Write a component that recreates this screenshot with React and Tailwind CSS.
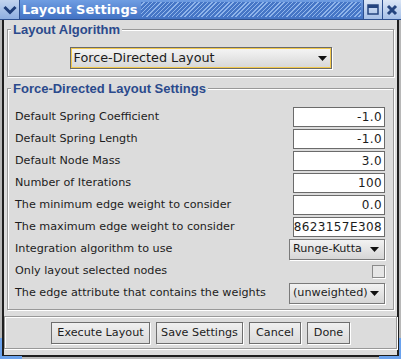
import React from 'react';

const font = { fontFamily: '"DejaVu Sans", Verdana, sans-serif' };
const legendFont = { fontFamily: '"Liberation Sans", Arial, sans-serif' };

const rows = [
  { label: 'Default Spring Coefficient', kind: 'field', value: '-1.0' },
  { label: 'Default Spring Length', kind: 'field', value: '-1.0' },
  { label: 'Default Node Mass', kind: 'field', value: '3.0' },
  { label: 'Number of Iterations', kind: 'field', value: '100' },
  { label: 'The minimum edge weight to consider', kind: 'field', value: '0.0' },
  { label: 'The maximum edge weight to consider', kind: 'field', value: '8623157E308' },
  { label: 'Integration algorithm to use', kind: 'combo', value: 'Runge-Kutta' },
  { label: 'Only layout selected nodes', kind: 'check' },
  { label: 'The edge attribute that contains the weights', kind: 'combo', value: '(unweighted)' },
];

function Arrow() {
  return (
    <svg width="9" height="5" viewBox="0 0 9 5" className="shrink-0">
      <path d="M0 0h9L4.5 5z" fill="#111" />
    </svg>
  );
}

function Legend({ children }) {
  return (
    <div
      className="-mt-[8px] ml-[3px] px-[2px] w-fit bg-[#dcdcdc] text-[13px] leading-[15px] font-bold text-[#2b4a8c]"
      style={legendFont}
    >
      {children}
    </div>
  );
}

function Row({ row }) {
  return (
    <div className="h-[22px] flex items-center justify-between">
      <span className="whitespace-nowrap">{row.label}</span>
      {row.kind === 'field' && (
        <div className="w-[92px] h-[20px] bg-white border border-[#6b6b6b] flex justify-end items-center overflow-hidden pr-[2px] whitespace-nowrap text-[12px] tracking-[0.4px]">
          <span className="shrink-0">{row.value}</span>
        </div>
      )}
      {row.kind === 'combo' && (
        <div className="w-[96px] h-[21px] border border-[#7a7a7a] bg-gradient-to-b from-[#f2f2f2] to-[#d6d6d6] shadow-[1px_1px_0_#fff] flex items-center justify-between pl-[3px] pr-[5px] whitespace-nowrap">
          <span>{row.value}</span>
          <Arrow />
        </div>
      )}
      {row.kind === 'check' && (
        <div className="w-[13px] h-[13px] border border-[#8a8a8a] bg-[#e6e6e6] shadow-[1px_1px_0_#fff]" />
      )}
    </div>
  );
}

function Btn({ children, w }) {
  return (
    <div className={`${w} h-[22px] border border-[#6e6e6e] bg-gradient-to-b from-[#f0f0f0] to-[#dadada] shadow-[1px_1px_0_#fff] flex items-center justify-center`}>
      {children}
    </div>
  );
}

export default function App() {
  return (
    <div className="w-[401px] h-[359px] bg-[#c4c4c4] relative overflow-hidden text-[11.2px] text-[#1c1c1c]" style={font}>
      {/* title bar */}
      <div className="h-[20px] flex items-stretch bg-gradient-to-b from-[#6f9de2] to-[#4272c4] border-b border-[#2c4f8f]">
        <div className="w-[20px] flex items-center justify-center bg-gradient-to-b from-[#c2d4ef] to-[#8eaee0] border-r border-[#2c4f8f]">
          <svg width="14" height="10" viewBox="0 0 14 10">
            <path d="M1.5 2L7 7.5L12.5 2" stroke="#1d3c78" strokeWidth="3" fill="none" />
          </svg>
        </div>
        <div className="pl-[2px] pr-[4px] text-white font-bold text-[13px] leading-[19px] whitespace-nowrap">Layout Settings</div>
        <div className="flex-1 my-[2px] bg-[repeating-linear-gradient(135deg,#4676c6_0px,#4676c6_2px,#8fb4ea_2px,#8fb4ea_3px)]" />
        <div className="w-[19px] ml-[2px] flex items-center justify-center bg-gradient-to-b from-[#dbe6f6] to-[#a6c0e8] border-l border-[#2c4f8f]">
          <svg width="12" height="11" viewBox="0 0 12 11">
            <rect x="1" y="1" width="10" height="9" fill="none" stroke="#24447f" strokeWidth="1.5" />
            <rect x="1" y="1" width="10" height="3" fill="#24447f" />
          </svg>
        </div>
        <div className="w-[19px] flex items-center justify-center bg-gradient-to-b from-[#dbe6f6] to-[#a6c0e8] border-l border-[#2c4f8f]">
          <svg width="12" height="12" viewBox="0 0 12 12">
            <path d="M2 2L10 10M10 2L2 10" stroke="#24447f" strokeWidth="3" />
          </svg>
        </div>
      </div>

      {/* window body */}
      <div className="h-[339px] border-x-2 border-b-2 border-[#b8b8b8]">
        <div className="h-full border-x-2 border-b-2 border-[#1e1e1e] bg-[#dcdcdc] flex flex-col">
          <div className="px-[3px] flex flex-col">
            <div className="mt-[9px] border border-[#999] shadow-[1px_1px_0_#fff,inset_1px_1px_0_#fff] pb-[7px]">
              <Legend>Layout Algorithm</Legend>
              <div className="mt-[10px] mx-auto w-[262px] h-[22px] border border-[#6a6a6a] shadow-[1px_1px_0_#fff]">
                <div className="h-full border border-[#f2c94c] bg-gradient-to-b from-[#f4f4f4] to-[#d8d8d8] flex items-center justify-between pl-[2px] pr-[3px] text-[12.8px]">
                  <span>Force-Directed Layout</span>
                  <Arrow />
                </div>
              </div>
            </div>

            <div className="mt-[11px] border border-[#999] shadow-[1px_1px_0_#fff,inset_1px_1px_0_#fff] pb-[5px]">
              <Legend>Force-Directed Layout Settings</Legend>
              <div className="mt-[10px] pl-[7px] pr-[8px] flex flex-col">
                {rows.map((r) => (
                  <Row key={r.label} row={r} />
                ))}
              </div>
            </div>
          </div>

          <div className="mt-[6px] h-[33px] border border-[#999] shadow-[1px_1px_0_#fff,inset_1px_1px_0_#fff] flex items-start justify-center gap-[6px] pt-[5px]">
            <Btn w="w-[99px]">Execute Layout</Btn>
            <Btn w="w-[87px]">Save Settings</Btn>
            <Btn w="w-[52px]">Cancel</Btn>
            <Btn w="w-[43px]">Done</Btn>
          </div>
        </div>
      </div>

      {/* resize corners */}
      <div className="absolute left-0 bottom-0 w-[22px] h-[21px] border-l-2 border-b-[3px] border-[#6aa2ee]" />
      <div className="absolute right-0 bottom-0 w-[22px] h-[21px] border-r-2 border-b-[3px] border-[#6aa2ee]" />
    </div>
  );
}
